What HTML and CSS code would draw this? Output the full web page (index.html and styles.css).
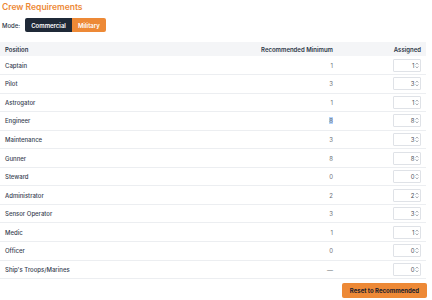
FILE: index.html
```html
<!DOCTYPE html>
<html lang="en">
<head>
    <meta charset="UTF-8">
    <title>Crew Requirements</title>
    <link rel="stylesheet" href="styles.css">
</head>
<body>
    <div class="crew-panel">
        <h1 class="crew-title">Crew Requirements</h1>

        <!-- Mode switch -->
        <div class="mode-row">
            <span class="mode-label">Mode:</span>
            <div class="mode-toggle">
                <button class="mode-btn mode-btn-dark">Commercial</button>
                <button class="mode-btn mode-btn-active">Military</button>
            </div>
        </div>

        <table class="crew-table">
            <thead>
                <tr>
                    <th class="col-pos">Position</th>
                    <th class="col-min">Recommended Minimum</th>
                    <th class="col-asg">Assigned</th>
                </tr>
            </thead>
            <tbody>
                <tr><td class="col-pos">Captain</td><td class="col-min">1</td><td class="col-asg"><span class="num-box">1<svg class="spin" viewBox="0 0 4 7"><path d="M0.6 2.6 L2 1 L3.4 2.6 M0.6 4.4 L2 6 L3.4 4.4"/></svg></span></td></tr>
                <tr><td class="col-pos">Pilot</td><td class="col-min">3</td><td class="col-asg"><span class="num-box">3<svg class="spin" viewBox="0 0 4 7"><path d="M0.6 2.6 L2 1 L3.4 2.6 M0.6 4.4 L2 6 L3.4 4.4"/></svg></span></td></tr>
                <tr><td class="col-pos">Astrogator</td><td class="col-min">1</td><td class="col-asg"><span class="num-box">1<svg class="spin" viewBox="0 0 4 7"><path d="M0.6 2.6 L2 1 L3.4 2.6 M0.6 4.4 L2 6 L3.4 4.4"/></svg></span></td></tr>
                <tr><td class="col-pos">Engineer</td><td class="col-min"><span class="selected">8</span></td><td class="col-asg"><span class="num-box">8<svg class="spin" viewBox="0 0 4 7"><path d="M0.6 2.6 L2 1 L3.4 2.6 M0.6 4.4 L2 6 L3.4 4.4"/></svg></span></td></tr>
                <tr><td class="col-pos">Maintenance</td><td class="col-min">3</td><td class="col-asg"><span class="num-box">3<svg class="spin" viewBox="0 0 4 7"><path d="M0.6 2.6 L2 1 L3.4 2.6 M0.6 4.4 L2 6 L3.4 4.4"/></svg></span></td></tr>
                <tr><td class="col-pos">Gunner</td><td class="col-min">8</td><td class="col-asg"><span class="num-box">8<svg class="spin" viewBox="0 0 4 7"><path d="M0.6 2.6 L2 1 L3.4 2.6 M0.6 4.4 L2 6 L3.4 4.4"/></svg></span></td></tr>
                <tr><td class="col-pos">Steward</td><td class="col-min">0</td><td class="col-asg"><span class="num-box">0<svg class="spin" viewBox="0 0 4 7"><path d="M0.6 2.6 L2 1 L3.4 2.6 M0.6 4.4 L2 6 L3.4 4.4"/></svg></span></td></tr>
                <tr><td class="col-pos">Administrator</td><td class="col-min">2</td><td class="col-asg"><span class="num-box">2<svg class="spin" viewBox="0 0 4 7"><path d="M0.6 2.6 L2 1 L3.4 2.6 M0.6 4.4 L2 6 L3.4 4.4"/></svg></span></td></tr>
                <tr><td class="col-pos">Sensor Operator</td><td class="col-min">3</td><td class="col-asg"><span class="num-box">3<svg class="spin" viewBox="0 0 4 7"><path d="M0.6 2.6 L2 1 L3.4 2.6 M0.6 4.4 L2 6 L3.4 4.4"/></svg></span></td></tr>
                <tr><td class="col-pos">Medic</td><td class="col-min">1</td><td class="col-asg"><span class="num-box">1<svg class="spin" viewBox="0 0 4 7"><path d="M0.6 2.6 L2 1 L3.4 2.6 M0.6 4.4 L2 6 L3.4 4.4"/></svg></span></td></tr>
                <tr><td class="col-pos">Officer</td><td class="col-min">0</td><td class="col-asg"><span class="num-box">0<svg class="spin" viewBox="0 0 4 7"><path d="M0.6 2.6 L2 1 L3.4 2.6 M0.6 4.4 L2 6 L3.4 4.4"/></svg></span></td></tr>
                <tr><td class="col-pos">Ship's Troops/Marines</td><td class="col-min">—</td><td class="col-asg"><span class="num-box">0<svg class="spin" viewBox="0 0 4 7"><path d="M0.6 2.6 L2 1 L3.4 2.6 M0.6 4.4 L2 6 L3.4 4.4"/></svg></span></td></tr>
            </tbody>
        </table>

        <div class="actions">
            <button class="reset-btn">Reset to Recommended</button>
        </div>
    </div>
</body>
</html>
```

FILE: styles.css
```css
/* Page */
body {
    margin: 0;
    font-family: Inter, "Noto Sans", sans-serif;
    background: #ffffff;
    color: #2d3748;
}

.crew-panel {
    width: 428px;
}

/* Title */
.crew-title {
    margin: 0 0 4px 2px;
    font-size: 8.5px;
    line-height: 14px;
    font-weight: 600;
    color: #ed8936;
}

/* Mode switch */
.mode-row {
    display: flex;
    align-items: center;
    gap: 5px;
    height: 14px;
    margin: 0 0 10px 2px;
}

.mode-label {
    font-size: 6px;
    font-weight: 500;
    color: #2d3748;
}

.mode-toggle {
    display: flex;
    height: 14px;
    border-radius: 2px;
    overflow: hidden;
}

.mode-btn {
    border: none;
    margin: 0;
    font-family: Inter, "Noto Sans", sans-serif;
    font-size: 6px;
    font-weight: 600;
    padding: 0 6px;
    height: 14px;
}

.mode-btn-dark {
    background: #1f2937;
    color: #ffffff;
}

.mode-btn-active {
    background: #ed8936;
    color: #ffffff;
}

/* Table */
.crew-table {
    width: 426px;
    border-collapse: collapse;
    font-size: 6px;
}

.crew-table thead tr {
    height: 14px;
    background: #f4f5f7;
}

.crew-table th {
    font-weight: 600;
    color: #2d3748;
}

.crew-table tbody tr {
    height: 18.55px;
    border-bottom: 1px solid #eceef1;
}

.crew-table th,
.crew-table td {
    padding: 0 4px;
    vertical-align: middle;
}

.col-pos {
    text-align: left;
    padding-left: 5px !important;
}

.crew-table td.col-pos {
    color: #374151;
    font-weight: 500;
}

.col-min {
    text-align: right;
    width: 150px;
}

.crew-table td.col-min {
    color: #6b6f76;
}

.col-asg {
    text-align: right;
    width: 80px;
    padding-right: 5px !important;
}

.selected {
    background: #b4d5fe;
}

/* Number field */
.num-box {
    display: inline-flex;
    align-items: center;
    justify-content: flex-end;
    box-sizing: border-box;
    width: 28px;
    height: 13px;
    padding-right: 1px;
    border: 1px solid #dfe2e7;
    border-radius: 1px;
    color: #4b4f56;
    background: #ffffff;
}

.spin {
    width: 4px;
    height: 7px;
    margin-left: 0.5px;
    fill: none;
    stroke: #8a9099;
    stroke-width: 0.7;
}

/* Reset button */
.actions {
    display: flex;
    justify-content: flex-end;
    margin-top: 3.5px;
}

.reset-btn {
    width: 85px;
    height: 15px;
    margin-right: 1px;
    border: none;
    border-radius: 2px;
    background: #ed8936;
    color: #1a202c;
    font-family: Inter, "Noto Sans", sans-serif;
    font-size: 6px;
    font-weight: 700;
}
```
